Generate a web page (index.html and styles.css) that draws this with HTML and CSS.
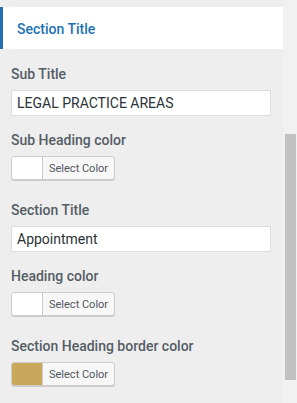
FILE: index.html
```html
<!DOCTYPE html>
<html>
<head>
<meta charset="utf-8">
<link rel="stylesheet" href="styles.css">
</head>
<body>
<div class="app">
  <div class="panel">
    <div class="section-header">Section Title</div>
    <div class="controls">
      <div class="control control-text">
        <label class="control-label">Sub Title</label>
        <input class="text-input" type="text" value="LEGAL PRACTICE AREAS">
      </div>
      <div class="control control-color">
        <label class="control-label">Sub Heading color</label>
        <button class="color-btn"><span class="swatch"></span><span class="btn-text">Select Color</span></button>
      </div>
      <div class="control control-text">
        <label class="control-label">Section Title</label>
        <input class="text-input" type="text" value="Appointment">
      </div>
      <div class="control control-color">
        <label class="control-label">Heading color</label>
        <button class="color-btn"><span class="swatch"></span><span class="btn-text">Select Color</span></button>
      </div>
      <div class="control control-color">
        <label class="control-label">Section Heading border color</label>
        <button class="color-btn"><span class="swatch swatch-gold"></span><span class="btn-text">Select Color</span></button>
      </div>
    </div>
  </div>
  <div class="scroll-track"><div class="scroll-thumb"></div></div>
</div>
</body>
</html>
```
FILE: styles.css
```css
html, body {
  margin: 0;
  padding: 0;
}
body {
  background: #eeeeee;
  font-family: Roboto, "Noto Sans", sans-serif;
  overflow: hidden;
}
.app {
  display: grid;
  grid-template-columns: 283px 14px;
  height: 403px;
}
.panel {
  padding-top: 7px;
}
.section-header {
  background: #ffffff;
  border-left: 3px solid #2271b1;
  height: 42px;
  box-sizing: border-box;
  padding-left: 14px;
  padding-top: 1px;
  display: flex;
  align-items: center;
  font-size: 14px;
  font-weight: 500;
  color: #2271b1;
}
.controls {
  padding: 15px 12px 0 11px;
}
.control-label {
  display: block;
  font-size: 14px;
  font-weight: 500;
  line-height: 20px;
  color: #555d66;
  margin-bottom: 6px;
}
.control-text {
  margin-bottom: 14px;
}
.control-color {
  margin-bottom: 20px;
}
.text-input {
  display: block;
  box-sizing: border-box;
  width: 260px;
  height: 26px;
  margin: 0;
  border: 1px solid #dddddd;
  border-radius: 0;
  background: #ffffff;
  padding: 0 5px;
  font-family: Roboto, "Noto Sans", sans-serif;
  font-size: 14px;
  color: #2c3338;
  outline: none;
}
.color-btn {
  display: flex;
  align-items: stretch;
  box-sizing: border-box;
  width: 104px;
  height: 24px;
  margin: 0;
  padding: 0;
  border: 1px solid #cccccc;
  border-radius: 3px;
  background: #f7f7f7;
  box-shadow: 0 1px 0 #cccccc;
  overflow: hidden;
  font-family: Roboto, "Noto Sans", sans-serif;
}
.swatch {
  width: 30px;
  background: #ffffff;
  border-right: 1px solid #cccccc;
}
.swatch-gold {
  background: #c9a85c;
}
.btn-text {
  display: flex;
  align-items: center;
  padding-left: 6px;
  font-size: 11px;
  color: #50575e;
}
.scroll-track {
  background: #f1f1f1;
  height: 403px;
}
.scroll-thumb {
  margin-top: 134px;
  margin-left: 2px;
  width: 11px;
  height: 246px;
  background: #c1c1c1;
}
```
